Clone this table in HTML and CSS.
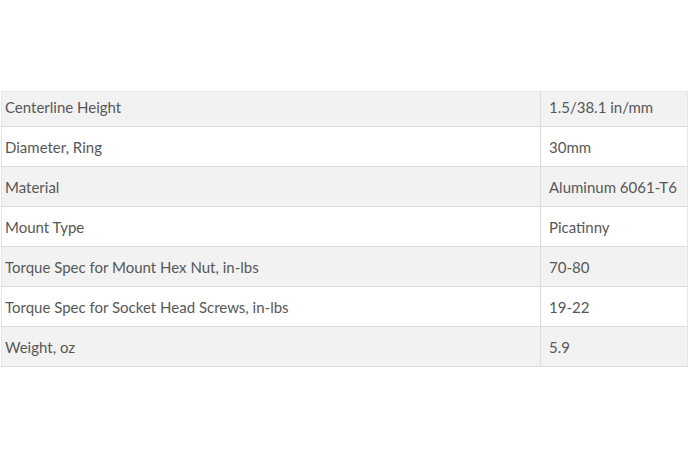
FILE: index.html
```html
<!DOCTYPE html>
<html>
<head>
<meta charset="utf-8">
<link rel="stylesheet" href="styles.css">
</head>
<body>
<div class="page">
  <table class="specs">
    <tr class="first"><td class="name">Centerline Height</td><td class="val">1.5/38.1 in/mm</td></tr>
    <tr><td class="name">Diameter, Ring</td><td class="val">30mm</td></tr>
    <tr><td class="name">Material</td><td class="val">Aluminum 6061-T6</td></tr>
    <tr><td class="name">Mount Type</td><td class="val">Picatinny</td></tr>
    <tr><td class="name">Torque Spec for Mount Hex Nut, in-lbs</td><td class="val">70-80</td></tr>
    <tr><td class="name">Torque Spec for Socket Head Screws, in-lbs</td><td class="val">19-22</td></tr>
    <tr><td class="name">Weight, oz</td><td class="val">5.9</td></tr>
  </table>
</div>
</body>
</html>
```
FILE: styles.css
```css
html, body {
  margin: 0;
  padding: 0;
  background: #ffffff;
}
.page {
  padding: 91px 2px 0 1px;
}
.specs {
  width: 687px;
  border-collapse: collapse;
  font-family: Lato, "Open Sans", sans-serif;
  font-size: 15px;
  color: #575757;
  border: 1px solid #e6e6e6;
}
.specs td {
  height: 40px;
  padding: 0 0 0 3px;
  border-bottom: 1px solid #dcdcdc;
  vertical-align: middle;
  box-sizing: border-box;
}
.specs tr.first td {
  height: 35px;
  padding-bottom: 4px;
}
.specs tr:nth-child(odd) td {
  background: #f2f2f2;
}
.specs td.name {
  width: 539px;
}
.specs td.val {
  padding-left: 8px;
  border-left: 1px solid #dcdcdc;
}
```
